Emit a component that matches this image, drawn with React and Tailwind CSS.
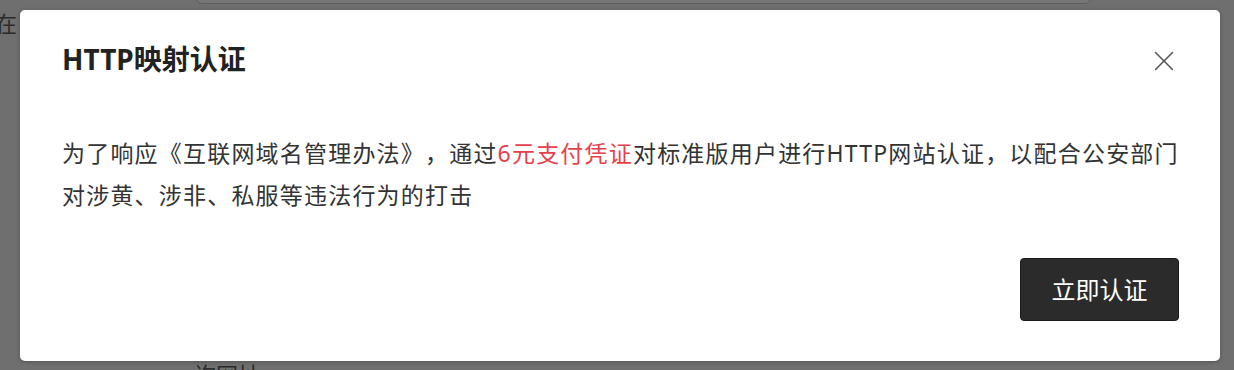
import { X } from "lucide-react";

const font = { fontFamily: '"Noto Sans", "Noto Sans CJK SC", sans-serif' };

export default function App() {
  return (
    <div
      className="relative h-[370px] w-full overflow-hidden bg-[#6f6f6f]"
      style={font}
    >
      {/* dimmed page underneath */}
      <div className="absolute left-[196px] top-[-30px] h-[34px] w-[895px] rounded-b-[6px] border border-[#5f5f5f] bg-[#767676]" />
      <span className="absolute left-[-5px] top-[8px] text-[22px] leading-[30px] text-[#2b2b2b]">在</span>
      <span className="absolute left-[194px] top-[359px] text-[22px] leading-[30px] text-[#2b2b2b]">询网址</span>

      {/* modal */}
      <div className="absolute left-[20px] top-[10px] flex h-[351px] w-[1200px] flex-col rounded-[5px] bg-white shadow-[0_1px_4px_rgba(0,0,0,0.25)]">
        <div className="flex items-center justify-between pl-[42px] pr-[39px] pt-[29px]">
          <h2 className="text-[28px] font-bold leading-[36px] text-[#222]">HTTP映射认证</h2>
          <button className="mt-[5px] text-[#555]">
            <X size={34} strokeWidth={1.1} />
          </button>
        </div>

        <p className="mt-[54px] pl-[42px] pr-[30px] text-[23px] leading-[42px] tracking-[1.2px] text-[#333] [text-spacing-trim:space-all]">
          为了响应《互联网域名管理办法》，通过<span className="text-[#e5404c]">6元支付凭证</span>对标准版用户进行HTTP网站认证，以配合公安部门对涉黄、涉非、私服等违法行为的打击
        </p>

        <div className="mt-auto flex justify-end pb-[40px] pr-[41px]">
          <button className="h-[63px] w-[159px] rounded-[4px] border border-[#1a1a1a] bg-[#2b2b2b] text-[24px] text-white">
            立即认证
          </button>
        </div>
      </div>
    </div>
  );
}
